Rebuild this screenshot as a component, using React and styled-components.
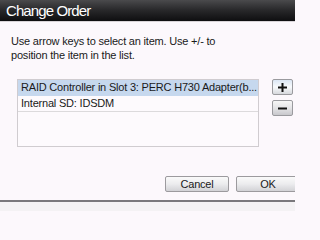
import React from 'react';
import styled, { createGlobalStyle } from 'styled-components';

const GlobalStyle = createGlobalStyle`
  html, body {
    margin: 0;
    padding: 0;
    background: #fcf8fc;
    overflow: hidden;
  }
  body {
    font-family: "Liberation Sans", Arial, sans-serif;
  }
`;

const Viewport = styled.div`
  width: 295px;
  height: 211px;
  overflow: hidden;
`;

const Dialog = styled.div`
  width: 310px;
  height: 211px;
  display: flex;
  flex-direction: column;
  background: #fcf8fc;
`;

const TitleBar = styled.div`
  height: 21px;
  flex: none;
  padding-left: 6px;
  background: linear-gradient(to bottom, #4a4a4c 0%, #2a2a2c 45%, #0e0e10 100%);
  color: #ffffff;
  font-size: 15px;
  line-height: 21px;
  letter-spacing: -0.9px;
  border-bottom: 1px solid #d8d4d8;
`;

const Body = styled.div`
  flex: 1;
  display: flex;
  flex-direction: column;
  padding: 12px 0 0 11px;
`;

const Instructions = styled.p`
  margin: 0;
  font-size: 11px;
  line-height: 14px;
  letter-spacing: -0.2px;
  color: #1a1a1a;
`;

const Workspace = styled.div`
  display: flex;
  align-items: flex-start;
  gap: 13px;
  margin: 17px 0 0 6px;
`;

const List = styled.div`
  width: 240px;
  height: 66px;
  border: 1px solid #d0ccd0;
  background: #fdfafd;
  display: flex;
  flex-direction: column;
`;

const Row = styled.div`
  height: 15px;
  line-height: 15px;
  padding-left: 3px;
  font-size: 11px;
  letter-spacing: -0.2px;
  color: #1a1a1a;
  white-space: nowrap;
  background: ${(p) => (p.$selected ? '#c6d8ee' : 'transparent')};
  border-bottom: 1px solid ${(p) => (p.$selected ? '#c6d8ee' : '#dcdadc')};
`;

const SideButtons = styled.div`
  display: flex;
  flex-direction: column;
  gap: 5px;
`;

const IconButton = styled.button`
  width: 21px;
  height: 16px;
  padding: 0;
  display: flex;
  align-items: center;
  justify-content: center;
  border: 1px solid #9a9a9e;
  border-radius: 2px;
  background: ${(p) =>
    p.$active
      ? 'linear-gradient(to bottom, #dbe6f4 0%, #f8fafc 50%, #d6d8dc 100%)'
      : 'linear-gradient(to bottom, #f6f6f6 0%, #e4e4e6 50%, #c8c8cc 100%)'};
`;

const Footer = styled.div`
  margin-top: auto;
  display: flex;
  justify-content: flex-end;
  gap: 7px;
  padding: 0 10px 8px 0;
  border-bottom: 2px solid #7a787c;
`;

const FooterWrap = styled.div`
  height: 9px;
  background: #f4f2f4;
`;

const DialogButton = styled.button`
  width: 64px;
  height: 16px;
  padding: 0;
  font-family: "Liberation Sans", Arial, sans-serif;
  font-size: 11px;
  letter-spacing: -0.2px;
  color: #1a1a1a;
  border: 1px solid #9c9a9e;
  border-radius: 2px;
  background: linear-gradient(to bottom, #fafafa 0%, #ececee 50%, #d2d2d6 100%);
`;

function Plus() {
  return (
    <svg width="9" height="9" viewBox="0 0 9 9">
      <rect x="3.5" y="0" width="2" height="9" fill="#111" />
      <rect x="0" y="3.5" width="9" height="2" fill="#111" />
    </svg>
  );
}

function Minus() {
  return (
    <svg width="9" height="9" viewBox="0 0 9 9">
      <rect x="0" y="3.5" width="9" height="2" fill="#111" />
    </svg>
  );
}

export default function App() {
  return (
    <>
      <GlobalStyle />
      <Viewport>
        <Dialog>
          <TitleBar>Change Order</TitleBar>
          <Body>
            <Instructions>
              Use arrow keys to select an item. Use +/- to
              <br />
              position the item in the list.
            </Instructions>
            <Workspace>
              <List>
                <Row $selected>RAID Controller in Slot 3: PERC H730 Adapter(b...</Row>
                <Row>Internal SD: IDSDM</Row>
              </List>
              <SideButtons>
                <IconButton $active aria-label="Move up">
                  <Plus />
                </IconButton>
                <IconButton aria-label="Move down">
                  <Minus />
                </IconButton>
              </SideButtons>
            </Workspace>
          </Body>
          <Footer>
            <DialogButton>Cancel</DialogButton>
            <DialogButton>OK</DialogButton>
          </Footer>
          <FooterWrap />
        </Dialog>
      </Viewport>
    </>
  );
}
